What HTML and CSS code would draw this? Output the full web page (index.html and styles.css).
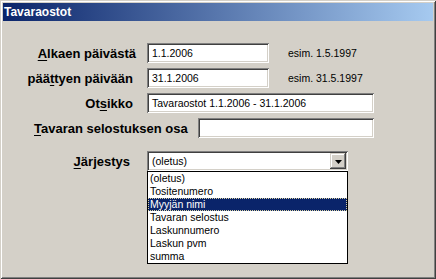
FILE: index.html
```html
<!DOCTYPE html>
<html lang="fi">
<head>
<meta charset="utf-8">
<title>Tavaraostot</title>
<link rel="stylesheet" href="styles.css">
</head>
<body>
<div class="window">
  <div class="titlebar"><span class="title">Tavaraostot</span></div>
  <div class="client">
    <div class="row">
      <span class="lbl lbl-a"><u>A</u>lkaen päivästä</span>
      <div class="field w-date">1.1.2006</div>
      <span class="hint">esim. 1.5.1997</span>
    </div>
    <div class="row">
      <span class="lbl lbl-b">pää<u>t</u>tyen päivään</span>
      <div class="field w-date">31.1.2006</div>
      <span class="hint">esim. 31.5.1997</span>
    </div>
    <div class="row">
      <span class="lbl lbl-b">Ot<u>s</u>ikko</span>
      <div class="field w-title">Tavaraostot 1.1.2006 - 31.1.2006</div>
    </div>
    <div class="row">
      <span class="lbl lbl-wide"><u>T</u>avaran selostuksen osa</span>
      <div class="field w-desc"></div>
    </div>
    <div class="row row-order">
      <span class="lbl lbl-c"><u>J</u>ärjestys</span>
      <div class="combo">
        <div class="field combo-box">
          <span class="combo-text">(oletus)</span>
          <span class="combo-btn">
            <svg width="7" height="4" viewBox="0 0 7 4"><polygon points="0,0 7,0 3.5,4" fill="#000"/></svg>
          </span>
        </div>
        <ul class="droplist">
          <li class="item">(oletus)</li>
          <li class="item">Tositenumero</li>
          <li class="item selected">Myyjän nimi</li>
          <li class="item">Tavaran selostus</li>
          <li class="item">Laskunnumero</li>
          <li class="item">Laskun pvm</li>
          <li class="item">summa</li>
        </ul>
      </div>
    </div>
  </div>
</div>
</body>
</html>
```

FILE: styles.css
```css
* { box-sizing: border-box; }

html, body {
  margin: 0;
  padding: 0;
}

body {
  width: 436px;
  height: 279px;
  overflow: hidden;
  background: #d4d0c8;
  font-family: "Liberation Sans", Arial, sans-serif;
  color: #000;
}

.window {
  width: 436px;
  height: 279px;
  padding: 3px;
  background: #d4d0c8;
  box-shadow:
    inset 1px 1px #d4d0c8,
    inset -1px -1px #404040,
    inset 2px 2px #ffffff,
    inset -2px -2px #808080;
}

.titlebar {
  height: 18px;
  padding-left: 1px;
  background: linear-gradient(to right, #0a246a, #a6caf0);
  display: flex;
  align-items: center;
}

.title {
  color: #fff;
  font-weight: bold;
  font-size: 12px;
  line-height: 18px;
}

.client {
  display: flex;
  flex-direction: column;
  gap: 5px;
  padding-top: 22px;
}

.row {
  display: flex;
  align-items: center;
  height: 20px;
}

.row-order {
  margin-top: 8px;
}

.lbl {
  width: 144px;
  text-align: right;
  font-weight: bold;
  font-size: 13px;
  white-space: nowrap;
}

.lbl u { text-underline-offset: 2px; }

.lbl-a { padding-right: 11px; }
.lbl-b { padding-right: 14px; }
.lbl-c { padding-right: 17px; }

.lbl-wide {
  width: 195px;
  text-align: left;
  padding-left: 31px;
}

.field {
  height: 20px;
  background: #fff;
  padding: 0 3px 0 5px;
  font-size: 10.5px;
  line-height: 20px;
  white-space: nowrap;
  box-shadow:
    inset 1px 1px #808080,
    inset -1px -1px #ffffff,
    inset 2px 2px #404040,
    inset -2px -2px #d4d0c8;
}

.w-date { width: 122px; }
.w-title { width: 227px; }
.w-desc { width: 176px; }

.hint {
  margin-left: 19px;
  font-size: 10.5px;
}

.combo {
  position: relative;
  width: 201px;
  height: 20px;
}

.combo-box {
  width: 201px;
  display: flex;
  align-items: center;
  padding-right: 2px;
}

.combo-text {
  flex: 1;
}

.combo-btn {
  width: 16px;
  height: 16px;
  display: flex;
  align-items: center;
  justify-content: center;
  padding-top: 1px;
  background: #d4d0c8;
  box-shadow:
    inset -1px -1px #404040,
    inset 1px 1px #d4d0c8,
    inset -2px -2px #808080,
    inset 2px 2px #ffffff;
}

.combo-btn svg { display: block; }

.droplist {
  position: absolute;
  left: 0;
  top: 20px;
  width: 201px;
  margin: 0;
  padding: 0;
  list-style: none;
  background: #fff;
  border: 1px solid #000;
}

.item {
  height: 13px;
  line-height: 13px;
  padding-left: 2px;
  font-size: 10.5px;
  white-space: nowrap;
}

.selected {
  background: #0a246a;
  color: #fff;
  outline: 1px dotted #d8d0a0;
  outline-offset: -1px;
}
```
